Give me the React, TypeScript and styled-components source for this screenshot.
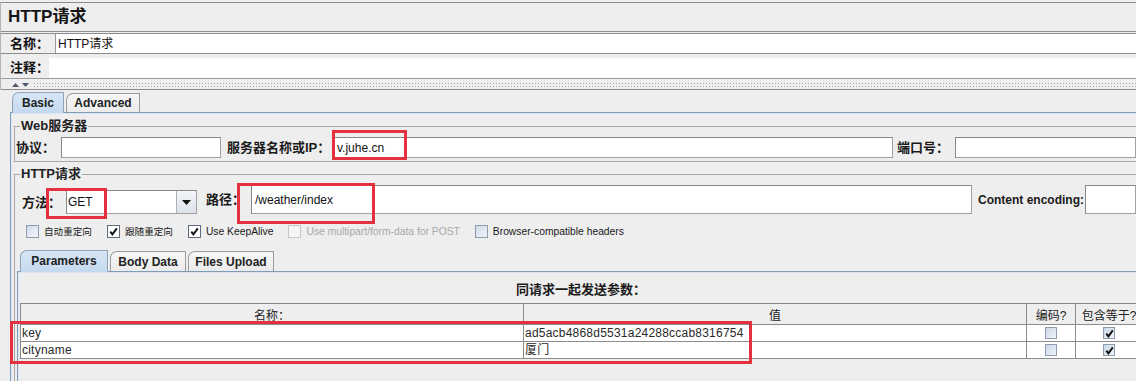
import React from 'react';
import styled, { createGlobalStyle } from 'styled-components';

const FONT = `'Liberation Sans', 'Noto Sans CJK SC', sans-serif`;

const Global = createGlobalStyle`
  html, body { margin: 0; padding: 0; background: #eeeeee; }
  body { font-family: ${FONT}; }
  * { box-sizing: border-box; }
`;

const Page = styled.div`
  position: relative;
  width: 1136px;
  height: 381px;
  overflow: hidden;
  background: #eeeeee;
  font-family: ${FONT};
  color: #111;
`;

/* ---------- header ---------- */
const Header = styled.div`
  margin-top: 2px;
  border-top: 1px solid #8c8c8c;
  border-left: 1px solid #b4b4b4;
`;

const Title = styled.div`
  height: 28px;
  padding-left: 7px;
  display: flex;
  align-items: center;
  font-size: 17px;
  font-weight: bold;
  line-height: 20px;
  color: #151515;
`;

const NameRow = styled.div`
  display: flex;
  height: 23px;
  border-top: 3px double #8c8c8c;
  border-bottom: 1px solid #8c8c8c;
`;

const CommentRow = styled.div`
  display: flex;
  height: 25px;
  padding-top: 4px;
  border-bottom: 1px solid #9c9c9c;
`;

const RowLabel = styled.div<{ $w: number }>`
  width: ${p => p.$w}px;
  flex: none;
  padding-left: 9px;
  display: flex;
  align-items: center;
  font-size: 13px;
  font-weight: bold;
  line-height: 16px;
  white-space: nowrap;
`;

const WideField = styled.div<{ $edge?: boolean }>`
  flex: 1;
  background: #fff;
  border-left: ${p => (p.$edge ? '1px solid #9a9a9a' : 'none')};
  display: flex;
  align-items: center;
  padding-left: 2px;
  font-size: 12px;
  line-height: 14px;
`;

const Splitter = styled.div`
  height: 11px;
  border-bottom: 1px solid #8c8c8c;
  display: flex;
  align-items: center;
  padding-top: 1px;
`;

const SplitArrows = styled.div`
  flex: none;
  width: 32px;
  padding-left: 11px;
  display: flex;
  gap: 3px;
  align-items: center;
`;

const Dots = styled.div`
  flex: 1;
  height: 5px;
  background-image: radial-gradient(circle, #a4a4a4 0.7px, transparent 0.9px);
  background-size: 3px 3px;
`;

/* ---------- tabs ---------- */
const TabArea = styled.div<{ $left: number; $mt: number }>`
  margin-left: ${p => p.$left}px;
  margin-top: ${p => p.$mt}px;
`;

const TabStrip = styled.div<{ $indent: number; $h: number }>`
  display: flex;
  align-items: flex-end;
  gap: 2px;
  height: ${p => p.$h}px;
  padding-left: ${p => p.$indent}px;
  position: relative;
  z-index: 1;
`;

const Tab = styled.div<{ $active?: boolean; $w: number; $h: number }>`
  width: ${p => p.$w}px;
  height: ${p => (p.$active ? p.$h + 1 : p.$h)}px;
  margin-bottom: ${p => (p.$active ? -1 : 0)}px;
  display: flex;
  align-items: center;
  justify-content: center;
  padding-bottom: ${p => (p.$active ? 1 : 0)}px;
  font-size: 12px;
  font-weight: bold;
  line-height: 14px;
  color: #222;
  border: 1px solid ${p => (p.$active ? '#8ea3bb' : '#9c9c9c')};
  border-bottom: none;
  border-radius: 7px 1px 0 0;
  background: ${p =>
    p.$active
      ? 'linear-gradient(#d7e6f5, #c4d9ef)'
      : 'linear-gradient(#f7f7f7, #ebebeb)'};
`;

const TabBody = styled.div<{ $pt: number }>`
  border-top: 1px solid #7f9db9;
  border-left: 1px solid #7f9db9;
  box-shadow: inset 1px 1px 0 #dce6f1;
  padding-top: ${p => p.$pt}px;
  padding-left: 3px;
  min-height: 300px;
`;

/* ---------- groups ---------- */
const Group = styled.fieldset<{ $mt: number }>`
  margin: ${p => p.$mt}px 0 0 0;
  padding: 4px 0 3px 1px;
  border: 1px solid #a6a6a6;
  border-right: none;
  min-width: 0;
`;

const GroupTitle = styled.legend`
  margin-left: 4px;
  padding: 0 1px;
  font-size: 13px;
  font-weight: bold;
  line-height: 14px;
  color: #222;
`;

const FormRow = styled.div<{ $h: number }>`
  display: flex;
  align-items: center;
  height: ${p => p.$h}px;
`;

const Label = styled.div<{ $w: number; $pl?: number; $size?: number; $mt?: number }>`
  width: ${p => p.$w}px;
  flex: none;
  padding-left: ${p => p.$pl ?? 0}px;
  margin-top: ${p => p.$mt ?? 0}px;
  font-size: ${p => p.$size ?? 13}px;
  font-weight: bold;
  line-height: 16px;
  white-space: nowrap;
  color: #1a1a1a;
`;

const Input = styled.div<{ $w?: number; $h: number }>`
  ${p => (p.$w ? `width: ${p.$w}px; flex: none;` : 'flex: 1;')}
  height: ${p => p.$h}px;
  align-self: flex-start;
  background: #fff;
  border: 1px solid #a0a0a0;
  border-top-color: #878787;
  border-left-color: #878787;
  display: flex;
  align-items: center;
  padding-left: 3px;
  font-size: 12px;
  line-height: 14px;
  color: #111;
`;

const Combo = styled.div`
  width: 131px;
  height: 24px;
  flex: none;
  align-self: flex-start;
  margin-top: 5px;
  display: flex;
  background: #fff;
  border: 1px solid #a0a0a0;
  border-top-color: #878787;
  border-left-color: #878787;
`;

const ComboText = styled.div`
  flex: 1;
  display: flex;
  align-items: center;
  padding-left: 1px;
  font-size: 12px;
  line-height: 14px;
`;

const ComboButton = styled.div`
  width: 20px;
  flex: none;
  display: flex;
  align-items: center;
  justify-content: center;
  border-left: 1px solid #a7b0bb;
  background: linear-gradient(#f3f5f8, #dde3ea);
`;

const CheckRow = styled.div`
  display: flex;
  align-items: center;
  gap: 15px;
  height: 13px;
  margin-top: 11px;
  padding-left: 10px;
`;

const CheckItem = styled.div`
  display: flex;
  align-items: center;
  gap: 5px;
`;

const Box = styled.div<{ $state: 'off' | 'on' | 'disabled'; $size: number }>`
  width: ${p => p.$size}px;
  height: ${p => p.$size}px;
  flex: none;
  display: flex;
  align-items: center;
  justify-content: center;
  border: 1px solid
    ${p => (p.$state === 'disabled' ? '#c6c6c6' : p.$state === 'on' ? '#5f6b78' : '#8e9cae')};
  background: ${p =>
    p.$state === 'disabled'
      ? '#f5f5f5'
      : p.$state === 'on'
      ? '#ffffff'
      : 'linear-gradient(135deg, #cfdbea, #f3f6fa)'};
`;

const CellBox = styled(Box)`
  background: linear-gradient(135deg, #cbd8e8, #eef3f9);
  border-color: #8e9cae;
`;

const CheckText = styled.span<{ $disabled?: boolean; $cjk?: boolean }>`
  font-size: ${p => (p.$cjk ? 9.6 : 10.3)}px;
  line-height: 13px;
  white-space: nowrap;
  color: ${p => (p.$disabled ? '#a8a8a8' : '#1a1a1a')};
`;

/* ---------- parameters table ---------- */
const InnerArea = styled.div`
  margin-left: 1px;
  margin-top: 12px;
`;

const InnerBody = styled.div`
  border-top: 1px solid #7f9db9;
  border-left: 1px solid #7f9db9;
  box-shadow: inset 1px 1px 0 #dce6f1;
  padding: 11px 0 0 2px;
  min-height: 120px;
`;

const Caption = styled.div`
  width: 1122px;
  text-align: center;
  font-size: 13px;
  font-weight: bold;
  line-height: 14px;
  color: #1a1a1a;
`;

const Grid = styled.div`
  margin-top: 6px;
  width: 1123px;
  display: grid;
  grid-template-columns: 503px 503px 49px 67px;
  border-top: 1px solid #888;
  border-left: 1px solid #888;
`;

const HeadCell = styled.div`
  height: 21px;
  border-right: 1px solid #8c8c8c;
  border-bottom: 1px solid #8c8c8c;
  display: flex;
  align-items: center;
  justify-content: center;
  font-size: 12px;
  line-height: 14px;
  color: #222;
  white-space: nowrap;
  overflow: hidden;
  padding-top: 4px;
`;

const Cell = styled.div<{ $center?: boolean }>`
  height: 17px;
  background: #fff;
  border-right: 1px solid #8c8c8c;
  border-bottom: 1px solid #8c8c8c;
  display: flex;
  align-items: center;
  justify-content: ${p => (p.$center ? 'center' : 'flex-start')};
  padding-left: ${p => (p.$center ? 0 : 1)}px;
  font-size: 12px;
  line-height: 14px;
  letter-spacing: 0.22px;
  color: #2a2a2a;
  white-space: nowrap;
`;

/* ---------- annotations ---------- */
const Mark = styled.div<{ $x: number; $y: number; $w: number; $h: number }>`
  position: absolute;
  left: ${p => p.$x}px;
  top: ${p => p.$y}px;
  width: ${p => p.$w}px;
  height: ${p => p.$h}px;
  border: 3px solid #e3323d;
  pointer-events: none;
`;

const Tick = () => (
  <svg width="9" height="9" viewBox="0 0 9 9">
    <path d="M1.3 4.6 L3.4 7.4 L7.8 1.4" fill="none" stroke="#111" strokeWidth="1.9" />
  </svg>
);

const Tri = ({ up }: { up?: boolean }) => (
  <svg width="7" height="4" viewBox="0 0 7 4">
    <path d={up ? 'M0 4 L3.5 0 L7 4 Z' : 'M0 0 L3.5 4 L7 0 Z'} fill="#4f5a6b" />
  </svg>
);

const Arrow = () => (
  <svg width="9" height="5" viewBox="0 0 9 5">
    <path d="M0 0 L9 0 L4.5 5 Z" fill="#111" />
  </svg>
);

const checks: { label: string; state: 'off' | 'on' | 'disabled'; cjk?: boolean }[] = [
  { label: '自动重定向', state: 'off', cjk: true },
  { label: '跟随重定向', state: 'on', cjk: true },
  { label: 'Use KeepAlive', state: 'on' },
  { label: 'Use multipart/form-data for POST', state: 'disabled' },
  { label: 'Browser-compatible headers', state: 'off' },
];

const params = [
  { name: 'key', value: 'ad5acb4868d5531a24288ccab8316754' },
  { name: 'cityname', value: '厦门' },
];

export default function App() {
  return (
    <Page>
      <Global />
      <Header>
        <Title>HTTP请求</Title>
        <NameRow>
          <RowLabel $w={54}>名称：</RowLabel>
          <WideField $edge>HTTP请求</WideField>
        </NameRow>
        <CommentRow>
          <RowLabel $w={48}>注释：</RowLabel>
          <WideField />
        </CommentRow>
        <Splitter>
          <SplitArrows>
            <Tri up />
            <Tri />
          </SplitArrows>
          <Dots />
        </Splitter>
      </Header>

      <TabArea $left={10} $mt={2}>
        <TabStrip $indent={2} $h={20}>
          <Tab $active $w={52} $h={20}>Basic</Tab>
          <Tab $w={74} $h={19}>Advanced</Tab>
        </TabStrip>
        <TabBody $pt={6}>
          <Group $mt={0}>
            <GroupTitle>Web服务器</GroupTitle>
            <FormRow $h={21}>
              <Label $w={45}>协议：</Label>
              <Input $w={160} $h={21} />
              <Label $w={112} $pl={6}>服务器名称或IP：</Label>
              <Input $w={560} $h={21}>v.juhe.cn</Input>
              <Label $w={62} $pl={4}>端口号：</Label>
              <Input $h={21} />
            </FormRow>
          </Group>

          <Group $mt={5}>
            <GroupTitle>HTTP请求</GroupTitle>
            <FormRow $h={29}>
              <Label $w={50} $pl={6} $mt={6}>方法：</Label>
              <Combo>
                <ComboText>GET</ComboText>
                <ComboButton>
                  <Arrow />
                </ComboButton>
              </Combo>
              <Label $w={54} $pl={9}>路径：</Label>
              <Input $w={721} $h={29}>/weather/index</Input>
              <Label $w={113} $pl={6} $size={12}>Content encoding:</Label>
              <Input $h={29} />
            </FormRow>

            <CheckRow>
              {checks.map(c => (
                <CheckItem key={c.label}>
                  <Box $state={c.state} $size={13}>{c.state === 'on' && <Tick />}</Box>
                  <CheckText $disabled={c.state === 'disabled'} $cjk={c.cjk}>
                    {c.label}
                  </CheckText>
                </CheckItem>
              ))}
            </CheckRow>

            <InnerArea>
              <TabStrip $indent={3} $h={21}>
                <Tab $active $w={88} $h={21}>Parameters</Tab>
                <Tab $w={76} $h={20}>Body Data</Tab>
                <Tab $w={86} $h={20}>Files Upload</Tab>
              </TabStrip>
              <InnerBody>
                <Caption>同请求一起发送参数：</Caption>
                <Grid>
                  <HeadCell>名称：</HeadCell>
                  <HeadCell>值</HeadCell>
                  <HeadCell>编码?</HeadCell>
                  <HeadCell>包含等于?</HeadCell>
                  {params.map(p => (
                    <React.Fragment key={p.name}>
                      <Cell>{p.name}</Cell>
                      <Cell>{p.value}</Cell>
                      <Cell $center>
                        <CellBox $state="off" $size={12} />
                      </Cell>
                      <Cell $center>
                        <CellBox $state="on" $size={12}>
                          <Tick />
                        </CellBox>
                      </Cell>
                    </React.Fragment>
                  ))}
                </Grid>
              </InnerBody>
            </InnerArea>
          </Group>
        </TabBody>
      </TabArea>

      <Mark $x={332} $y={130} $w={75} $h={30} />
      <Mark $x={46} $y={188} $w={61} $h={31} />
      <Mark $x={237} $y={183} $w={138} $h={41} />
      <Mark $x={10} $y={321} $w={742} $h={43} />
    </Page>
  );
}
